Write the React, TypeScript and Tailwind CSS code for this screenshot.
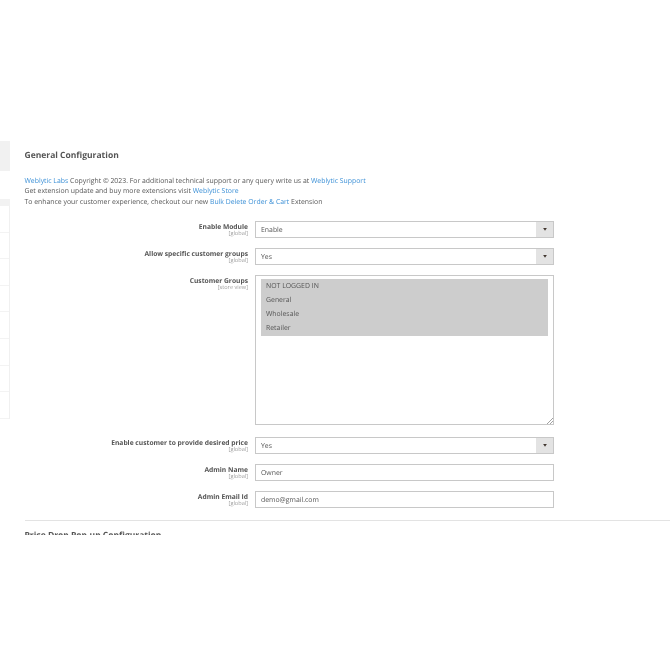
const F = "font-['Open_Sans',sans-serif] [text-rendering:geometricPrecision]";

function Label({ title, scope }: { title: string; scope: string }) {
  return (
    <div className="w-[248px] shrink-0 pt-[2px] text-right">
      <div className="text-[6.7px] leading-[8px] font-bold text-[#555555]">{title}</div>
      <div className="text-[5.6px] leading-[5px] text-[#a0a0a0]">{scope}</div>
    </div>
  );
}

function Select({ value }: { value: string }) {
  return (
    <div className="flex h-[17px] w-[299px] border border-[#c8c8c8] bg-white">
      <div className="flex-1 pl-[5px] text-[6.9px] leading-[17px] text-[#555555]">{value}</div>
      <div className="flex w-[17px] items-center justify-center bg-[#e3e3e3]">
        <svg width="4" height="3" viewBox="0 0 5 4"><path d="M0 0h5L2.5 3.5z" fill="#41362f" /></svg>
      </div>
    </div>
  );
}

function Input({ value }: { value: string }) {
  return (
    <div className="h-[17px] w-[299px] border border-[#c8c8c8] bg-white pl-[5px] text-[6.9px] leading-[17px] text-[#555555]">
      {value}
    </div>
  );
}

function Link({ children }: { children: string }) {
  return <span className="text-[#3a8fd6]">{children}</span>;
}

export default function App() {
  return (
    <div className={`${F} relative h-[670px] w-[670px] overflow-hidden bg-white blur-[0.25px]`}>
      <div className="h-[141px]" />
      <div className="flex h-[394px] overflow-hidden">
        <div className="w-[10px] shrink-0">
          <div className="h-[30px] bg-[#f1f1f1]" />
          <div className="mt-[28px] h-[7px] bg-[#f2f2f2]" />
          <div className="border-r border-[#f0f0f0]">
            {[0, 1, 2, 3, 4, 5, 6, 7].map((i) => (
              <div key={i} className="h-[26.6px] border-b border-[#f3f3f3]" />
            ))}
          </div>
        </div>
        <div className="ml-[14.5px] flex-1">
          <div className="mt-[9px] text-[8.5px] leading-[12px] font-bold text-[#555555]">General Configuration</div>
          <div className="mt-[15px] text-[6.88px] leading-[10.4px] text-[#555555]">
            <div><Link>Weblytic Labs</Link> Copyright © 2023. For additional technical support or any query write us at <Link>Weblytic Support</Link></div>
            <div>Get extension update and buy more extensions visit <Link>Weblytic Store</Link></div>
            <div>To enhance your customer experience, checkout our new <Link>Bulk Delete Order &amp; Cart</Link> Extension</div>
          </div>
          <div className="-ml-[24.5px] mt-[13px] flex flex-col gap-[10px]">
            <div className="flex gap-[7px]"><Label title="Enable Module" scope="[global]" /><Select value="Enable" /></div>
            <div className="flex gap-[7px]"><Label title="Allow specific customer groups" scope="[global]" /><Select value="Yes" /></div>
            <div className="mb-[2px] flex gap-[7px]">
              <Label title="Customer Groups" scope="[store view]" />
              <div className="relative h-[150px] w-[299px] border border-[#c8c8c8] bg-white px-[5px] pt-[3px]">
                <div className="bg-[#cdcdcd] pb-[0.5px] pt-[0.5px] text-[6.9px] leading-[14px] text-[#555555]">
                  <div className="pl-[5px]">NOT LOGGED IN</div>
                  <div className="pl-[5px]">General</div>
                  <div className="pl-[5px]">Wholesale</div>
                  <div className="pl-[5px]">Retailer</div>
                </div>
                <svg className="absolute bottom-0 right-0" width="6" height="6" viewBox="0 0 6 6"><path d="M0 6L6 0M3 6L6 3" stroke="#8a8a8a" strokeWidth="0.8" /></svg>
              </div>
            </div>
            <div className="flex gap-[7px]"><Label title="Enable customer to provide desired price" scope="[global]" /><Select value="Yes" /></div>
            <div className="flex gap-[7px]"><Label title="Admin Name" scope="[global]" /><Input value="Owner" /></div>
            <div className="flex gap-[7px]"><Label title="Admin Email Id" scope="[global]" /><Input value="demo@gmail.com" /></div>
          </div>
          <div className="mt-[12px] border-t border-[#e3e3e3]" />
          <div className="mt-[9px] text-[8.5px] leading-[12px] font-bold text-[#555555]">Price Drop Pop-up Configuration</div>
        </div>
      </div>
    </div>
  );
}
